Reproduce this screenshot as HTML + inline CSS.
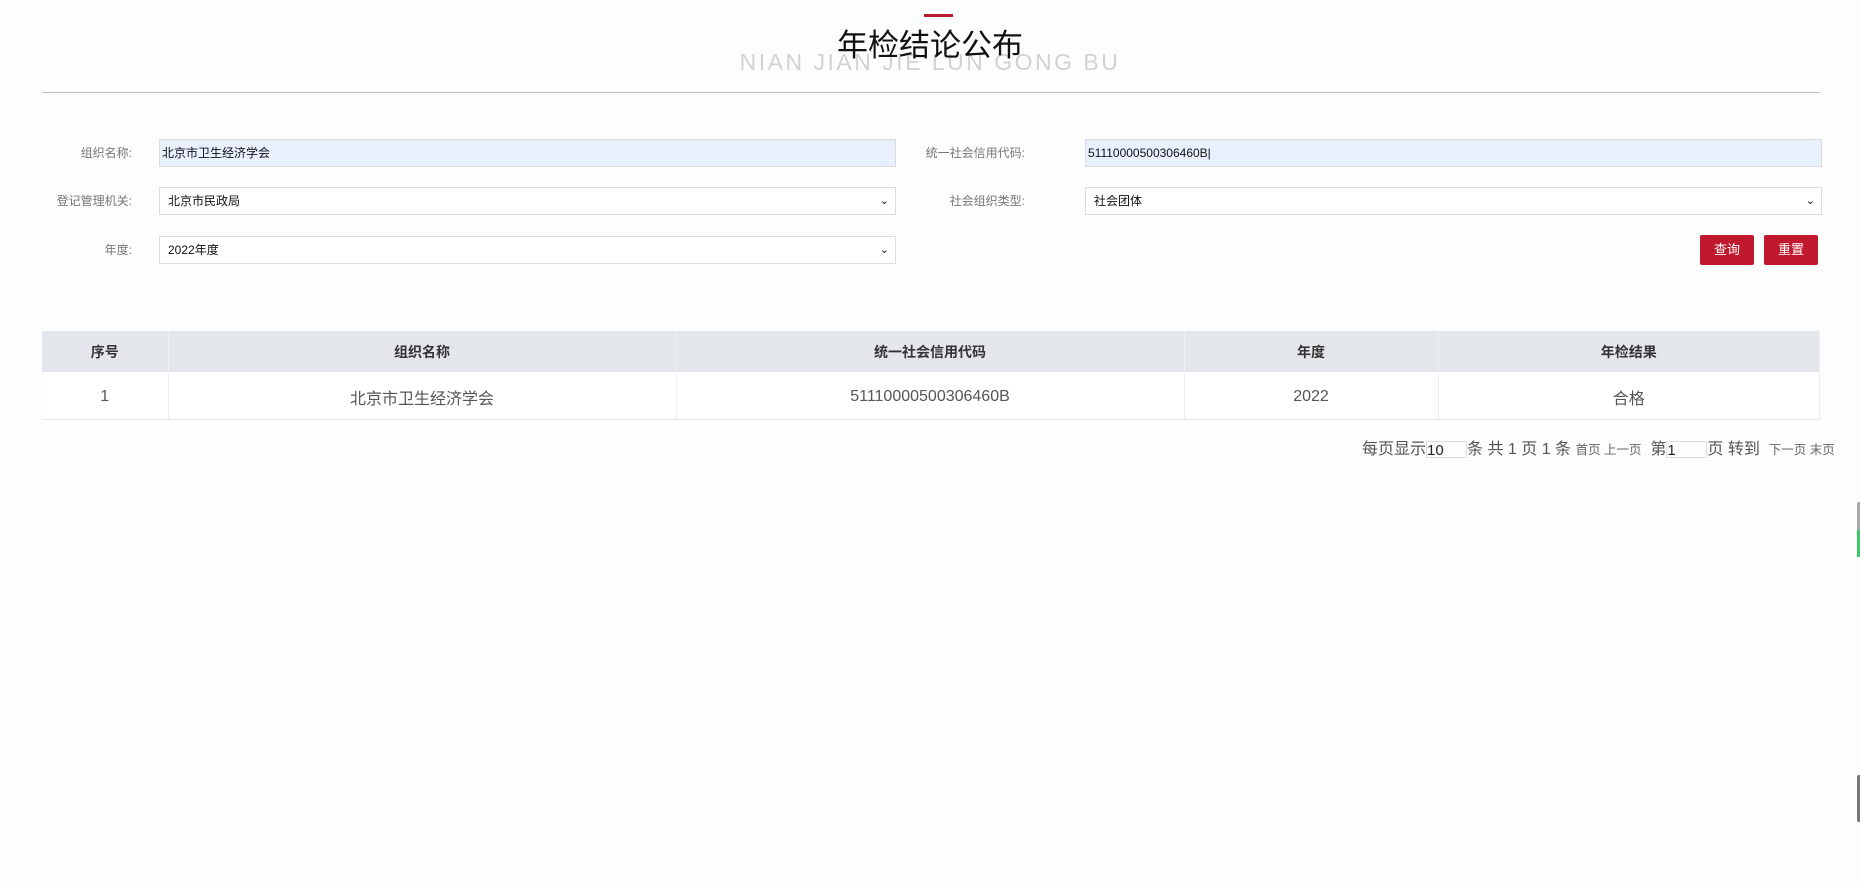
<!DOCTYPE html>
<html><head><meta charset="utf-8">
<style>
*{box-sizing:border-box;margin:0;padding:0}
body{width:1860px;height:885px;background:#fdfdfd;font-family:"Liberation Sans","Noto Sans CJK SC",sans-serif;position:relative;overflow:hidden;color:#333}
.abs{position:absolute}
.bar{left:924px;top:14px;width:29px;height:3px;background:#b81c2e}
.title{left:0;width:1860px;top:20px;text-align:center;font-size:31px;color:#111;z-index:2}
.sub{left:0;width:1860px;top:49px;text-align:center;font-size:23px;letter-spacing:2.5px;color:#d2d2d2;font-family:"Liberation Sans",sans-serif}
.hr{left:42px;top:92px;width:1778px;height:1px;background:#bdbdbd}
.lbl{font-size:12px;color:#777;text-align:right;width:200px;line-height:29px}
.inp{height:28px;border:1px solid #dcdcdc;background:#fff;font-size:12px;color:#111;line-height:26px;padding-left:8px}
.inp.f{background:#e8f0fe;padding-left:2px}
.arr{position:absolute;right:6px;top:0;font-size:11px}
.btn{width:54px;height:30px;background:#c0182c;color:#fff;font-size:13px;text-align:center;line-height:30px;border-radius:2px}
table{position:absolute;left:42px;top:331px;width:1778px;border-collapse:collapse}
th{background:#e3e6ea;height:41px;font-size:14px;font-weight:bold;color:#333;border-right:1px solid #eef0f2}
td{height:47px;font-size:16px;color:#555;text-align:center;vertical-align:middle;border-right:1px solid #eee;border-bottom:1px solid #e6e6e6;background:#fff;padding-top:3px}
.pg{left:1362px;top:439px;font-size:16px;color:#555;white-space:nowrap;line-height:22px}
.pg small{font-size:12.5px;color:#666}
.pg span.b{display:inline-block;width:41px;height:17px;border:1px solid #ddd;vertical-align:middle;font-size:15px;line-height:17px;color:#222}
</style></head><body>
<div class="abs bar"></div>
<div class="abs sub">NIAN JIAN JIE LUN GONG BU</div>
<div class="abs title">年检结论公布</div>
<div class="abs hr"></div>

<div class="abs lbl" style="left:-68px;top:139px">组织名称:</div>
<div class="abs inp f" style="left:159px;top:139px;width:737px">北京市卫生经济学会</div>
<div class="abs lbl" style="left:825px;top:139px">统一社会信用代码:</div>
<div class="abs inp f" style="left:1085px;top:139px;width:737px">51110000500306460B|</div>

<div class="abs lbl" style="left:-68px;top:187px">登记管理机关:</div>
<div class="abs inp" style="left:159px;top:187px;width:737px">北京市民政局<span class="arr">&#8964;</span></div>
<div class="abs lbl" style="left:825px;top:187px">社会组织类型:</div>
<div class="abs inp" style="left:1085px;top:187px;width:737px">社会团体<span class="arr">&#8964;</span></div>

<div class="abs lbl" style="left:-68px;top:236px">年度:</div>
<div class="abs inp" style="left:159px;top:236px;width:737px">2022年度<span class="arr">&#8964;</span></div>
<div class="abs btn" style="left:1700px;top:235px">查询</div>
<div class="abs btn" style="left:1764px;top:235px">重置</div>

<table>
<tr><th style="width:126px">序号</th><th style="width:508px">组织名称</th><th style="width:508px">统一社会信用代码</th><th style="width:254px">年度</th><th>年检结果</th></tr>
<tr><td>1</td><td>北京市卫生经济学会</td><td>51110000500306460B</td><td>2022</td><td>合格</td></tr>
</table>

<div class="abs pg">每页显示<span class="b">10</span>条 共 1 页 1 条 <small>首页 上一页</small> &nbsp;第<span class="b">1</span>页 转到 &nbsp;<small>下一页 末页</small></div>

<div class="abs" style="left:1857px;top:502px;width:3px;height:30px;background:#aaa;border-radius:2px 0 0 2px"></div>
<div class="abs" style="left:1857px;top:530px;width:3px;height:27px;background:#3cc46e"></div>
<div class="abs" style="left:1857px;top:775px;width:3px;height:47px;background:#777;border-radius:2px 0 0 2px"></div>
</body></html>
